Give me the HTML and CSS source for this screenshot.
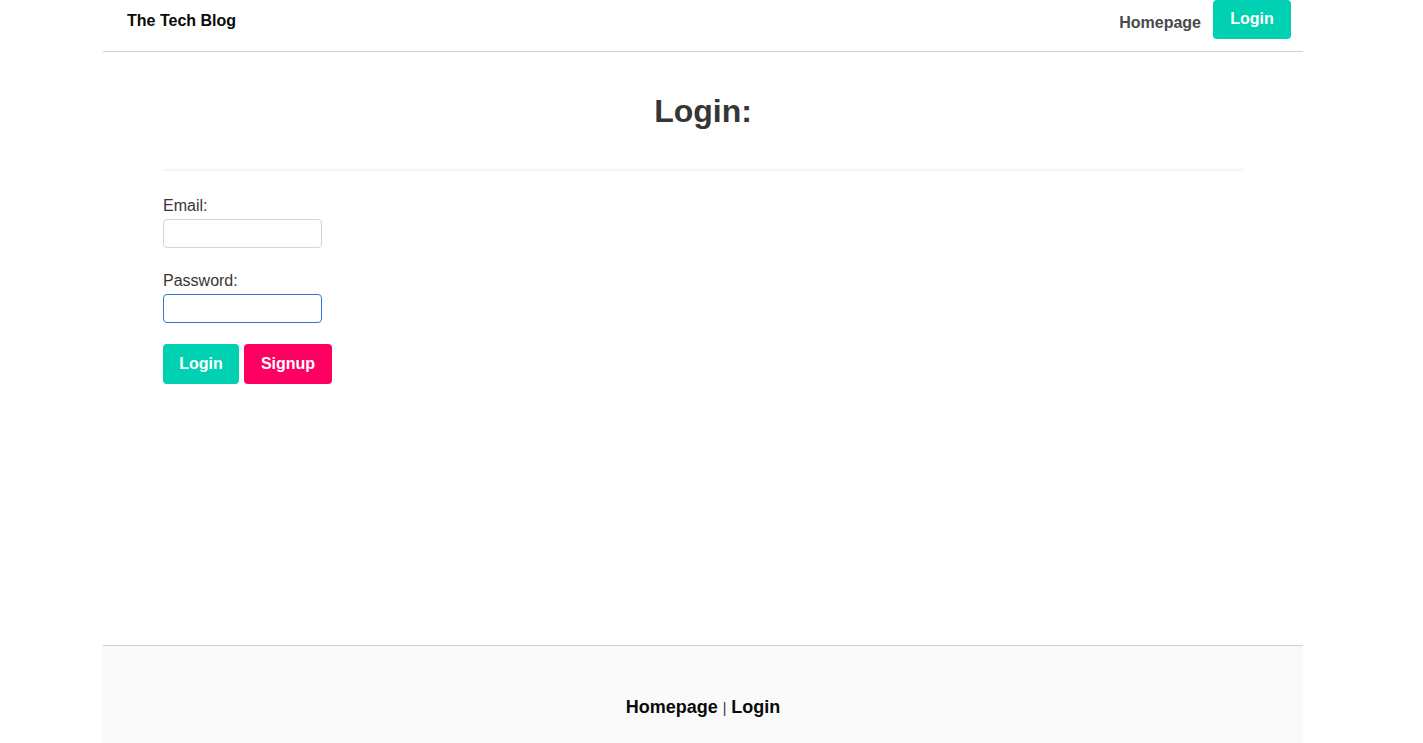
FILE: index.html
```html
<!DOCTYPE html>
<html lang="en">
<head>
<meta charset="utf-8">
<title>The Tech Blog</title>
<link rel="stylesheet" href="styles.css">
</head>
<body>
<div class="frame">
  <div class="page">
    <header class="topbar">
      <a class="brand" href="#">The Tech Blog</a>
      <nav class="topnav">
        <a class="navlink" href="#">Homepage</a>
        <a class="btn btn-primary nav-btn" href="#">Login</a>
      </nav>
    </header>
    <main class="content">
      <h1 class="title">Login:</h1>
      <hr class="divider">
      <form class="login-form">
        <div class="field">
          <label class="label" for="email">Email:</label>
          <input class="input" id="email" type="text">
        </div>
        <div class="field">
          <label class="label" for="password">Password:</label>
          <input class="input input-focus" id="password" type="password">
        </div>
        <div class="actions">
          <button class="btn btn-primary" type="button">Login</button>
          <button class="btn btn-danger" type="button">Signup</button>
        </div>
      </form>
    </main>
    <footer class="footer">
      <a class="footlink" href="#">Homepage</a>
      <span class="sep">|</span>
      <a class="footlink" href="#">Login</a>
    </footer>
  </div>
</div>
</body>
</html>
```
FILE: styles.css
```css
html, body {
  margin: 0;
  padding: 0;
  background: #fff;
  font-family: "Liberation Sans", Arial, Helvetica, sans-serif;
  color: #363636;
}
.frame {
  padding-right: 17px;
}
.page {
  width: 1200px;
  margin: 0 auto;
  height: 743px;
  display: flex;
  flex-direction: column;
}
.topbar {
  height: 51px;
  border-bottom: 1px solid #cfcfcf;
  display: flex;
  justify-content: space-between;
  align-items: flex-start;
  padding: 0 12px 0 24px;
  box-sizing: content-box;
}
.brand {
  margin-top: 12px;
  font-size: 16px;
  font-weight: bold;
  color: #0a0a0a;
  text-decoration: none;
}
.topnav {
  display: flex;
  align-items: flex-start;
  gap: 12px;
}
.navlink {
  margin-top: 14px;
  font-size: 16px;
  font-weight: bold;
  color: #4a4a4a;
  text-decoration: none;
}
.btn {
  display: inline-flex;
  align-items: center;
  justify-content: center;
  height: 40px;
  border: none;
  border-radius: 4px;
  color: #fff;
  font-family: "Liberation Sans", Arial, sans-serif;
  font-size: 16px;
  font-weight: bold;
  text-decoration: none;
  padding: 0 17px;
  box-sizing: border-box;
  cursor: pointer;
}
.btn-primary { background: #00d1b2; }
.btn-danger { background: #ff0062; }
.nav-btn {
  height: 39px;
  width: 78px;
  padding: 0;
  padding-bottom: 1px;
}
.content {
  flex: 1;
  padding: 0 60px;
}
.title {
  margin: 39px 0 0;
  text-align: center;
  font-size: 32px;
  line-height: 40px;
  font-weight: bold;
  color: #363636;
}
.divider {
  margin: 38px 0 26px;
  border: none;
  height: 2px;
  background: #f5f5f5;
}
.login-form {
  display: flex;
  flex-direction: column;
}
.field {
  display: flex;
  flex-direction: column;
  align-items: flex-start;
  margin-bottom: 21px;
}
.field + .field {
  margin-top: 3px;
}
.label {
  font-size: 16px;
  line-height: 18px;
  color: #363636;
  margin-bottom: 4px;
}
.input {
  width: 159px;
  height: 29px;
  box-sizing: border-box;
  border: 1px solid #d4d4d4;
  border-radius: 4px;
  margin: 0;
  padding: 0 6px;
  background: #fff;
  outline: none;
}
.input.input-focus {
  border: 1px solid #3273dc;
}
.actions {
  display: flex;
  gap: 5px;
}
.actions .btn-primary { width: 76px; padding: 0; }
.actions .btn-danger { width: 88px; padding: 0; }
.footer {
  height: 98px;
  border-top: 1px solid #cfcfcf;
  background: #fafafa;
  display: flex;
  justify-content: center;
  align-items: flex-start;
  gap: 5px;
  padding-top: 51px;
  box-sizing: border-box;
  font-size: 18px;
  font-weight: bold;
}
.footlink {
  color: #0a0a0a;
  text-decoration: none;
}
.sep {
  font-weight: normal;
  font-size: 14px;
  line-height: 22px;
  color: #333;
}
```
